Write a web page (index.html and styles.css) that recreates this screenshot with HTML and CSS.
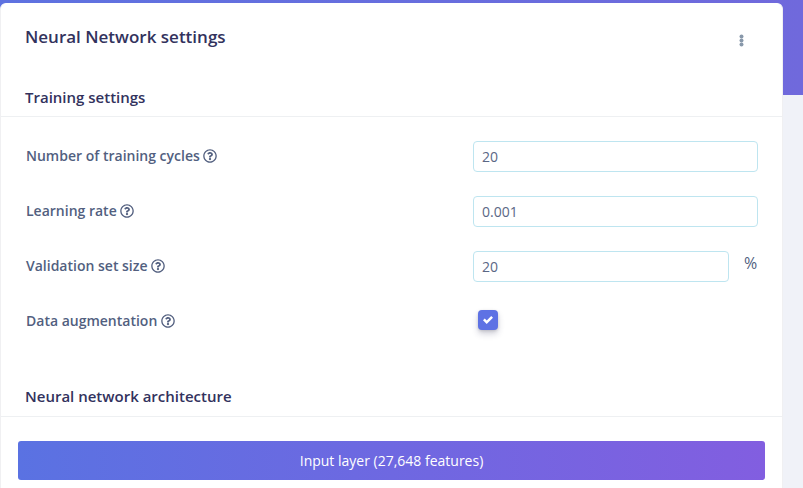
FILE: index.html
```html
<!DOCTYPE html>
<html lang="en">
<head>
<meta charset="utf-8">
<title>Neural Network settings</title>
<link rel="stylesheet" href="styles.css">
</head>
<body>
<svg class="defs" width="0" height="0" aria-hidden="true">
  <symbol id="help" viewBox="0 0 512 512"><path fill="currentColor" d="M256 8C119.043 8 8 119.083 8 256c0 136.997 111.043 248 248 248s248-111.003 248-248C504 119.083 392.957 8 256 8zm0 448c-110.532 0-200-89.431-200-200 0-110.495 89.472-200 200-200 110.491 0 200 89.471 200 200 0 110.53-89.431 200-200 200zm107.244-255.2c0 67.052-72.421 68.084-72.421 92.863V300c0 6.627-5.373 12-12 12h-45.647c-6.627 0-12-5.373-12-12v-8.659c0-35.745 27.1-50.034 47.579-61.516 17.561-9.845 28.324-16.541 28.324-29.579 0-17.246-21.999-28.693-39.784-28.693-23.189 0-33.894 10.977-48.942 29.969-4.057 5.12-11.46 6.071-16.666 2.124l-27.824-21.098c-5.107-3.872-6.251-11.066-2.644-16.363C184.846 131.491 214.94 112 261.794 112c49.071 0 101.45 38.304 101.45 88.8zM298 368c0 23.159-18.841 42-42 42s-42-18.841-42-42 18.841-42 42-42 42 18.841 42 42z"/></symbol>
</svg>
<main class="card">
  <header class="card-header">
    <h1>Neural Network settings</h1>
    <svg class="more" viewBox="0 0 5 13"><circle cx="2.5" cy="2.5" r="2"/><circle cx="2.5" cy="6.5" r="2"/><circle cx="2.5" cy="10.5" r="2"/></svg>
  </header>
  <h2 class="section-title">Training settings</h2>
  <form class="fields">
    <div class="row">
      <label for="cycles">Number of training cycles <svg class="help"><use href="#help"/></svg></label>
      <div class="control"><input id="cycles" type="text" value="20"></div>
    </div>
    <div class="row">
      <label for="rate">Learning rate <svg class="help"><use href="#help"/></svg></label>
      <div class="control"><input id="rate" type="text" value="0.001"></div>
    </div>
    <div class="row">
      <label for="validation">Validation set size <svg class="help"><use href="#help"/></svg></label>
      <div class="control"><input id="validation" type="text" value="20"><span class="unit">%</span></div>
    </div>
    <div class="row">
      <label>Data augmentation <svg class="help"><use href="#help"/></svg></label>
      <div class="control"><span class="checkbox" role="checkbox" aria-checked="true" aria-label="Data augmentation"><svg viewBox="0 0 8 8"><path fill="#fff" d="M6.564.75l-3.59 3.612-1.538-1.55L0 4.26 2.974 7.25 8 2.193z"/></svg></span></div>
    </div>
  </form>
  <h2 class="section-title architecture">Neural network architecture</h2>
  <div class="layer">Input layer (27,648 features)</div>
</main>
</body>
</html>
```
FILE: styles.css
```css
* { box-sizing: border-box; }
body {
  margin: 0;
  height: 488px;
  padding-top: 3px;
  overflow: hidden;
  font-family: "Open Sans", sans-serif;
  background: linear-gradient(90deg, #5e72e0, #7069dc) 0 0 / 100% 95px no-repeat #f0f2f8;
}
.defs { display: block; height: 0; }
.card {
  width: 783px;
  height: 500px;
  background: #fff;
  border: 1px solid #f0f0f2;
  border-top-color: #fff;
  border-radius: 6px;
}
.card-header {
  display: flex;
  justify-content: space-between;
  height: 80px;
  padding: 20px 38px 0 24px;
}
h1, h2 { margin: 0; color: #32325d; font-weight: 600; }
h1 { font-size: 17px; line-height: 25px; }
.more { width: 5px; height: 13px; margin-top: 10px; fill: #8898aa; }
.section-title {
  height: 33px;
  padding: 2px 24px 0;
  border-bottom: 1px solid #eef0f2;
  font-size: 15px;
  line-height: 22px;
}
.architecture { height: 34px; }
.fields { height: 266px; padding: 24px 24px 0 25px; }
.row { display: flex; justify-content: space-between; height: 55px; }
.row label {
  display: flex;
  align-items: center;
  gap: 3.5px;
  height: 29px;
  color: #525f7f;
  font-size: 14px;
  line-height: 19px;
  font-weight: 600;
}
.help { width: 14px; height: 14px; }
.control { display: flex; justify-content: space-between; width: 285px; }
input {
  flex: 1;
  min-width: 0;
  height: 31px;
  padding: 0 8px 1px;
  border: 1px solid #bee5f0;
  border-radius: 4px;
  background: #fff;
  color: #5b6785;
  font: 400 14px "Open Sans", sans-serif;
}
.unit { width: 29px; padding-left: 15px; color: #525f7f; font-size: 16px; line-height: 25px; }
.checkbox {
  display: grid;
  place-items: center;
  width: 20px;
  height: 20px;
  margin: 4px 0 0 5px;
  border-radius: 4px;
  background: #5e72e4;
  box-shadow: 0 4px 6px rgba(50,50,93,.22), 0 1px 3px rgba(0,0,0,.14);
}
.checkbox svg { width: 10px; height: 10px; }
.layer {
  width: 747px;
  height: 39px;
  margin: 24px 0 0 17px;
  border-radius: 3px;
  background: linear-gradient(87deg, #5a72e2, #825ee0);
  color: #fff;
  font-size: 14px;
  line-height: 39px;
  text-align: center;
}
```
